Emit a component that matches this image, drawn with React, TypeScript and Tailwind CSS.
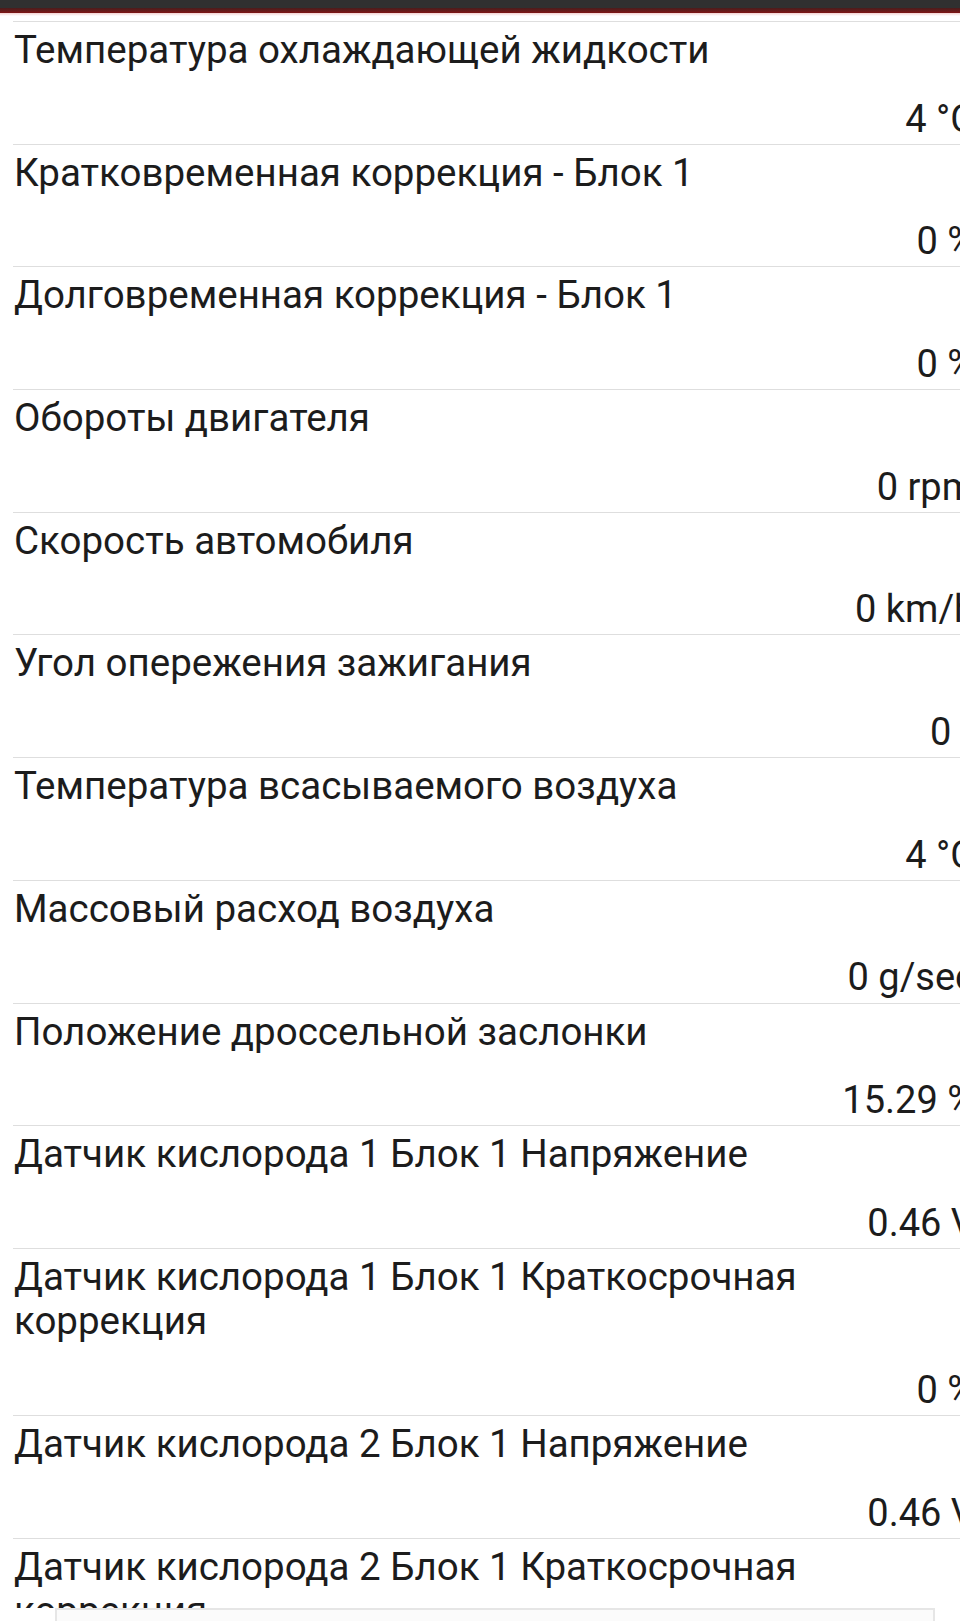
import React from 'react';

type Param = { name: string; value: string };

const params: Param[] = [
  { name: 'Температура охлаждающей жидкости', value: '4 °C' },
  { name: 'Кратковременная коррекция - Блок 1', value: '0 %' },
  { name: 'Долговременная коррекция - Блок 1', value: '0 %' },
  { name: 'Обороты двигателя', value: '0 rpm' },
  { name: 'Скорость автомобиля', value: '0 km/h' },
  { name: 'Угол опережения зажигания', value: '0 °' },
  { name: 'Температура всасываемого воздуха', value: '4 °C' },
  { name: 'Массовый расход воздуха', value: '0 g/sec' },
  { name: 'Положение дроссельной заслонки', value: '15.29 %' },
  { name: 'Датчик кислорода 1 Блок 1 Напряжение', value: '0.46 V' },
  { name: 'Датчик кислорода 1 Блок 1 Краткосрочная коррекция', value: '0 %' },
  { name: 'Датчик кислорода 2 Блок 1 Напряжение', value: '0.46 V' },
  { name: 'Датчик кислорода 2 Блок 1 Краткосрочная коррекция', value: '0 %' },
];

function ParamRow({ name, value }: Param) {
  return (
    <div className="border-t border-[#dedede] pt-[6px] pb-[3.1px]">
      <div className="pl-[1px] pr-[40px] text-[38.5px] leading-[44.6px] text-[#1c1c1c]">{name}</div>
      <div className="mt-[24px] text-right text-[38px] leading-[44px] text-[#1c1c1c]">{value}</div>
    </div>
  );
}

export default function App() {
  return (
    <div
      className="relative flex h-[1621px] w-[960px] flex-col overflow-hidden bg-white"
      style={{ fontFamily: 'Roboto, "Noto Sans", sans-serif' }}
    >
      {/* Toolbar edge */}
      <div className="h-[8px] shrink-0 bg-[#303030]" />
      <div className="h-[5px] shrink-0 bg-gradient-to-b from-[#4a1c1c] to-[#7e1414]" />
      <div className="h-[3px] shrink-0 bg-gradient-to-b from-[#f3d0d0] to-white" />

      {/* Parameter list */}
      <div className="mt-[5px] min-h-0 flex-1 overflow-hidden">
        <div className="ml-[13px] w-[962px]">
          {params.map((p, i) => (
            <ParamRow key={i} {...p} />
          ))}
        </div>
      </div>

      {/* Bottom banner */}
      <div className="h-[13px] shrink-0 bg-white pl-[55px] pr-[25px]">
        <div className="h-full border-l-2 border-r-2 border-t-2 border-[#e6e6e6] bg-[#fbfbfb]" />
      </div>
    </div>
  );
}
